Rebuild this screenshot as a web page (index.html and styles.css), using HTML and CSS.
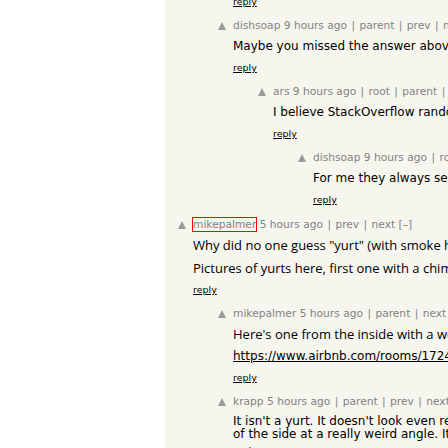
FILE: index.html
```html
<!DOCTYPE html>
<html>
<head>
<meta charset="utf-8">
<title>Thread</title>
<link rel="stylesheet" href="styles.css">
</head>
<body>
<div class="page">
  <div class="gutter"></div>
  <main class="thread">
    <div class="scroll">
      <div class="comment l1 lead">
        <div class="vote"></div>
        <div class="body">
          <div class="reply"><a href="#">reply</a></div>
        </div>
      </div>

      <div class="comment l1">
        <div class="vote"><svg viewBox="0 0 8 8"><polygon points="4,0 8,8 0,8"/></svg></div>
        <div class="body">
          <div class="meta"><a class="user" href="#">dishsoap</a> <span class="age">9 hours ago</span> <span class="sep">|</span> <a href="#">parent</a> <span class="sep">|</span> <a href="#">prev</a> <span class="sep">|</span> <a href="#">next</a> <a href="#">[–]</a></div>
          <div class="text"><p>Maybe you missed the answer above, it's a yurt.</p></div>
          <div class="reply"><a href="#">reply</a></div>
        </div>
      </div>

      <div class="comment l2">
        <div class="vote"><svg viewBox="0 0 8 8"><polygon points="4,0 8,8 0,8"/></svg></div>
        <div class="body">
          <div class="meta"><a class="user" href="#">ars</a> <span class="age">9 hours ago</span> <span class="sep">|</span> <a href="#">root</a> <span class="sep">|</span> <a href="#">parent</a> <span class="sep">|</span> <a href="#">next</a> <a href="#">[–]</a></div>
          <div class="text"><p>I believe StackOverflow randomizes the order of answers.</p></div>
          <div class="reply"><a href="#">reply</a></div>
        </div>
      </div>

      <div class="comment l3">
        <div class="vote"><svg viewBox="0 0 8 8"><polygon points="4,0 8,8 0,8"/></svg></div>
        <div class="body">
          <div class="meta"><a class="user" href="#">dishsoap</a> <span class="age">9 hours ago</span> <span class="sep">|</span> <a href="#">root</a> <span class="sep">|</span> <a href="#">parent</a> <span class="sep">|</span> <a href="#">next</a> <a href="#">[–]</a></div>
          <div class="text"><p>For me they always seem to be in the same order.</p></div>
          <div class="reply"><a href="#">reply</a></div>
        </div>
      </div>

      <div class="comment l0 top">
        <div class="vote"><svg viewBox="0 0 8 8"><polygon points="4,0 8,8 0,8"/></svg></div>
        <div class="body">
          <div class="meta"><a class="user hl" href="#">mikepalmer</a> <span class="age">5 hours ago</span> <span class="sep">|</span> <a href="#">prev</a> <span class="sep">|</span> <a href="#">next</a> <a href="#">[–]</a></div>
          <div class="text alt"><p>Why did no one guess "yurt" (with smoke hole in the roof)?</p><p>Pictures of yurts here, first one with a chimney and a skylight.</p></div>
          <div class="reply"><a href="#">reply</a></div>
        </div>
      </div>

      <div class="comment l1">
        <div class="vote"><svg viewBox="0 0 8 8"><polygon points="4,0 8,8 0,8"/></svg></div>
        <div class="body">
          <div class="meta"><a class="user" href="#">mikepalmer</a> <span class="age">5 hours ago</span> <span class="sep">|</span> <a href="#">parent</a> <span class="sep">|</span> <a href="#">next</a> <a href="#">[–]</a></div>
          <div class="text mixed"><p class="alt">Here's one from the inside with a wood stove:</p><p><a href="#">https://www.airbnb.com/rooms/17240339</a></p></div>
          <div class="reply"><a href="#">reply</a></div>
        </div>
      </div>

      <div class="comment l1">
        <div class="vote"><svg viewBox="0 0 8 8"><polygon points="4,0 8,8 0,8"/></svg></div>
        <div class="body">
          <div class="meta"><a class="user" href="#">krapp</a> <span class="age">5 hours ago</span> <span class="sep">|</span> <a href="#">parent</a> <span class="sep">|</span> <a href="#">prev</a> <span class="sep">|</span> <a href="#">next</a> <a href="#">[–]</a></div>
          <div class="text tight"><p>It isn't a yurt. It doesn't look even remotely round, it's a photo<br>of the side at a really weird angle. It's a barn or a shed.</p></div>
          <div class="reply"><a href="#">reply</a></div>
        </div>
      </div>
    </div>
  </main>
</div>
</body>
</html>
```

FILE: styles.css
```css
html, body {
  margin: 0;
  padding: 0;
  background: #fff;
}

body {
  width: 448px;
  height: 448px;
  overflow: hidden;
}

.page {
  display: flex;
  height: 448px;
}

.gutter {
  width: 165px;
  flex: none;
  background: #fff;
}

.thread {
  flex: 1;
  min-width: 0;
  background: #f6f6ef;
  overflow: hidden;
  padding-left: 13px;
}

.scroll {
  margin-top: -9px;
}

.comment {
  display: flex;
  margin-top: 3px;
  white-space: nowrap;
}

.comment.lead {
  margin-top: 0;
}

.comment.top {
  margin-top: 4px;
}

.l0 { margin-left: 0; }
.l1 { margin-left: 40px; }
.l2 { margin-left: 80px; }
.l3 { margin-left: 120px; }

.vote {
  width: 15px;
  flex: none;
}

.vote svg {
  display: block;
  width: 8px;
  height: 8px;
  margin-top: 6px;
  fill: #9a9a9a;
}

.body {
  min-width: 0;
}

.meta {
  height: 20px;
  font-family: "DejaVu Sans", Verdana, sans-serif;
  font-size: 10.67px;
  line-height: 20px;
  color: #828282;
}

.meta a {
  color: #828282;
  text-decoration: none;
}

.meta .sep {
  margin: 0 1px;
}

.meta .user.hl {
  outline: 1px solid #ff0000;
}

.text {
  font-family: "DejaVu Sans", Verdana, sans-serif;
  font-size: 12px;
  line-height: 21px;
  color: #000;
}

.text p {
  margin: 0;
}

.text p + p {
  margin-top: 1px;
}

.text a {
  color: #000;
  text-decoration: underline;
}

.text.alt,
.text .alt {
  font-family: "Open Sans", "Noto Sans", sans-serif;
  font-size: 13px;
}

.text.alt p + p {
  margin-top: 2px;
}

.text.tight {
  line-height: 12.6px;
  padding-top: 3px;
}

.reply {
  height: 22px;
  font-family: "DejaVu Sans", Verdana, sans-serif;
  font-size: 9.5px;
  line-height: 22px;
}

.reply a {
  color: #000;
  text-decoration: underline;
}
```
